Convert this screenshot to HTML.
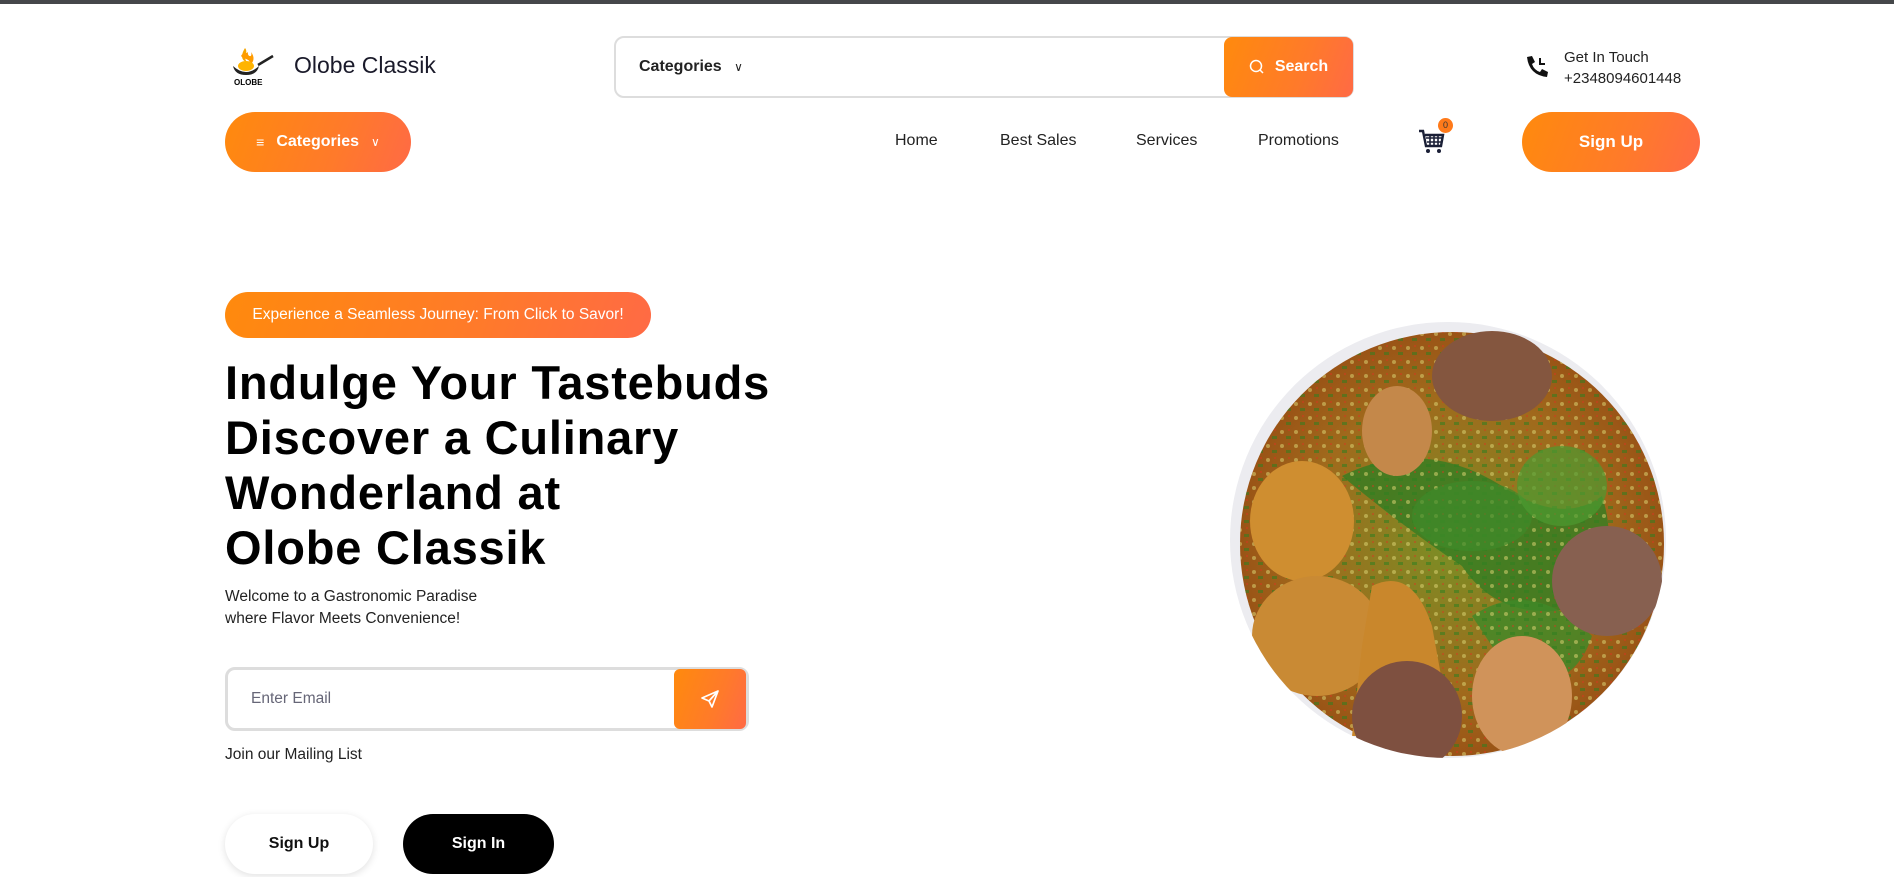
<!DOCTYPE html>
<html><head><meta charset="utf-8"><style>
*{margin:0;padding:0;box-sizing:border-box}
body{width:1894px;height:877px;overflow:hidden;background:#fff;font-family:"Liberation Sans",sans-serif;color:#111;position:relative}
.a{position:absolute}
.grad{background:linear-gradient(110deg,#ff8a0d 0%,#ff7a2a 60%,#ff6a45 100%)}
.topbar{left:0;top:0;width:1894px;height:4px;background:#45474a}
.nav{font-size:16px;color:#222;top:132px}
.btn{border-radius:32px;color:#fff;font-weight:bold;display:flex;align-items:center;justify-content:center}
h1{position:absolute;left:225px;top:355px;font-size:47px;line-height:55px;font-weight:bold;color:#000;letter-spacing:0.8px}
</style></head><body>
<div class="a topbar"></div>
<svg class="a" style="left:231px;top:44px" width="52" height="46" viewBox="0 0 52 46">
<path d="M14 4c4 5 -3 8 2 14c-5-1-7-6-2-14z" fill="#f5a500"/>
<path d="M10 12c3 4 10 2 9 9c4-3 5-8 1-13c2 6-4 5-3 0c-2 2-5 0-7 4z" fill="#ff9b00"/>
<ellipse cx="15" cy="22" rx="8" ry="5" fill="#ffb400"/>
<path d="M2 22q13 12 26 0q-2 9-13 9q-11 0-13-9z" fill="#222"/>
<path d="M27 21l15-9" stroke="#222" stroke-width="2.5"/>
<text x="3" y="41" font-size="8" font-weight="bold" font-family="Liberation Sans">OLOBE</text>
</svg>
<div class="a" style="left:294px;top:52px;font-size:23px;color:#1a1a2a">Olobe Classik</div>
<div class="a" style="left:614px;top:36px;width:740px;height:62px;border:2px solid #ddd;border-radius:10px"></div>
<div class="a" style="left:639px;top:58px;font-size:16px;font-weight:bold;color:#222">Categories <span style="font-weight:normal;font-size:12px;margin-left:8px">&#8744;</span></div>
<div class="a grad btn" style="left:1224px;top:37px;width:129px;height:60px;border-radius:8px;font-size:16px">
<svg width="16" height="16" viewBox="0 0 16 16" style="margin-right:10px"><circle cx="7" cy="7" r="5.5" fill="none" stroke="#fff" stroke-width="1.5"/><path d="M11 11l3 3" stroke="#fff" stroke-width="1.5"/></svg>Search</div>
<svg class="a" style="left:1524px;top:54px" width="26" height="26" viewBox="0 0 26 26"><path d="M3 3l5-1 3 6-3 2q2 6 8 8l2-3 6 3-1 5q-18-2-20-20z" fill="#111"/><path d="M16 4v6h5" stroke="#111" stroke-width="2" fill="none"/></svg>
<div class="a" style="left:1564px;top:47px;font-size:15px;color:#222;line-height:21px">Get In Touch<br>+2348094601448</div>
<div class="a grad btn" style="left:225px;top:112px;width:186px;height:60px;font-size:16px">
<span style="font-weight:normal;margin-right:12px;font-size:14px">&#8801;</span>Categories<span style="font-weight:normal;font-size:12px;margin-left:12px">&#8744;</span></div>
<div class="a nav" style="left:895px">Home</div>
<div class="a nav" style="left:1000px">Best Sales</div>
<div class="a nav" style="left:1136px">Services</div>
<div class="a nav" style="left:1258px">Promotions</div>
<svg class="a" style="left:1418px;top:128px" width="28" height="26" viewBox="0 0 28 26"><path d="M1 3h4l3 15h15l2-11H7" fill="none" stroke="#1a1f36" stroke-width="2.4"/><path d="M8 10h16M9 14h14M12 7v11M16 7v11M20 7v11" stroke="#1a1f36" stroke-width="1.6"/><circle cx="10" cy="23" r="2" fill="#1a1f36"/><circle cx="21" cy="23" r="2" fill="#1a1f36"/></svg>
<div class="a" style="left:1438px;top:118px;width:15px;height:15px;border-radius:50%;background:#ff7a1a;font-size:9px;color:#333;text-align:center;line-height:15px">0</div>
<div class="a grad btn" style="left:1522px;top:112px;width:178px;height:60px;font-size:17px">Sign Up</div>
<div class="a grad btn" style="left:225px;top:292px;width:426px;height:46px;font-weight:normal;font-size:15.5px">Experience a Seamless Journey: From Click to Savor!</div>
<h1>Indulge Your Tastebuds<br>Discover a Culinary<br>Wonderland at<br>Olobe Classik</h1>
<div class="a" style="left:225px;top:586px;font-size:15.5px;line-height:22px;color:#222">Welcome to a Gastronomic Paradise<br>where Flavor Meets Convenience!</div>
<div class="a" style="left:225px;top:667px;width:524px;height:64px;border:3px solid #ddd;border-radius:10px"></div>
<div class="a" style="left:251px;top:690px;font-size:15.5px;color:#667">Enter Email</div>
<div class="a grad btn" style="left:674px;top:669px;width:72px;height:60px;border-radius:6px">
<svg width="22" height="22" viewBox="0 0 22 22"><path d="M3 10l16-7-6 16-3-6z M10 13l9-10" fill="none" stroke="#fff" stroke-width="1.7" stroke-linejoin="round"/></svg></div>
<div class="a" style="left:225px;top:746px;font-size:15.5px;color:#222">Join our Mailing List</div>
<div class="a btn" style="left:225px;top:814px;width:148px;height:60px;background:#fff;color:#111;box-shadow:0 2px 8px rgba(0,0,0,.12);font-size:16px">Sign Up</div>
<div class="a btn" style="left:403px;top:814px;width:151px;height:60px;background:#000;font-size:16px">Sign In</div>
<svg class="a" style="left:1222px;top:316px" width="450" height="450" viewBox="0 0 450 450">
<defs><clipPath id="c"><circle cx="226" cy="224" r="218"/></clipPath>
<radialGradient id="g" cx="50%" cy="50%" r="50%"><stop offset="0" stop-color="#7a8f25"/><stop offset=".7" stop-color="#a06a1c"/><stop offset="1" stop-color="#9a5416"/></radialGradient>
<pattern id="p" width="14" height="14" patternUnits="userSpaceOnUse"><circle cx="4" cy="4" r="2" fill="#d8d070"/><rect x="8" y="8" width="5" height="3" fill="#2f7f20"/><circle cx="11" cy="2" r="1" fill="#e03020"/></pattern></defs>
<circle cx="226" cy="224" r="218" fill="#ececf0"/>
<g clip-path="url(#c)">
<circle cx="230" cy="228" r="212" fill="url(#g)"/>
<path d="M120 160q80-40 160 10q60 40 100 10q20 60-20 110q-80 20-120-40q-60-40-120-90z" fill="#3a7d22" opacity=".85"/>
<path d="M250 300q60-40 120 20q-20 60-80 40z" fill="#3f8a28" opacity=".8"/>
<circle cx="230" cy="228" r="212" fill="url(#p)" opacity=".55"/>
<ellipse cx="80" cy="205" rx="52" ry="60" fill="#cf8e30"/>
<ellipse cx="95" cy="320" rx="65" ry="60" fill="#c98a34"/>
<path d="M150 270q40-20 60 40l20 110h-100l10-90z" fill="#c9872c"/>
<ellipse cx="185" cy="400" rx="55" ry="55" fill="#7e5040"/>
<ellipse cx="270" cy="60" rx="60" ry="45" fill="#84563f"/>
<ellipse cx="175" cy="115" rx="35" ry="45" fill="#c4884a"/>
<ellipse cx="300" cy="380" rx="50" ry="60" fill="#d0935a"/>
<ellipse cx="385" cy="265" rx="55" ry="55" fill="#876050"/>
<ellipse cx="250" cy="200" rx="60" ry="35" fill="#3e8a2a" opacity=".7"/>
<ellipse cx="340" cy="170" rx="45" ry="40" fill="#4d9a30" opacity=".7"/>
</g></svg>
</body></html>
